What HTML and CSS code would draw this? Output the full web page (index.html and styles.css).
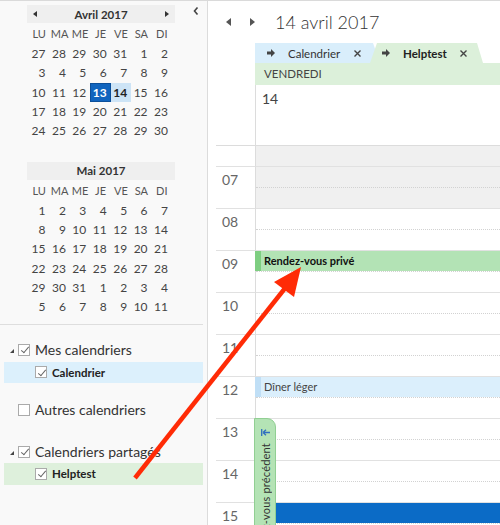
FILE: index.html
```html
<!DOCTYPE html>
<html lang="fr">
<head>
  <meta charset="UTF-8">
  <meta name="viewport" content="width=device-width, initial-scale=1">
  <title>Calendrier - Helptest</title>
  <link rel="stylesheet" href="styles.css">
</head>
<body>

<div class="app">

  <!-- Volet de navigation -->
  <aside class="nav-pane">
    <div class="nav-top">
      <div class="months">

        <!-- Avril -->
        <div class="mini-title">
          <span class="tri tri-left"></span>
          <span>Avril 2017</span>
          <span class="tri tri-right"></span>
        </div>
        <div class="mini-grid">
          <span class="dow">LU</span><span class="dow">MA</span><span class="dow">ME</span><span class="dow">JE</span><span class="dow">VE</span><span class="dow">SA</span><span class="dow">DI</span>
          <span>27</span><span>28</span><span>29</span><span>30</span><span>31</span><span>1</span><span>2</span>
          <span>3</span><span>4</span><span>5</span><span>6</span><span>7</span><span>8</span><span>9</span>
          <span>10</span><span>11</span><span>12</span><span class="sel">13</span><span class="today">14</span><span>15</span><span>16</span>
          <span>17</span><span>18</span><span>19</span><span>20</span><span>21</span><span>22</span><span>23</span>
          <span>24</span><span>25</span><span>26</span><span>27</span><span>28</span><span>29</span><span>30</span>
          <span></span><span></span><span></span><span></span><span></span><span></span><span></span>
        </div>

        <!-- Mai -->
        <div class="mini-title solo">
          <span>Mai 2017</span>
        </div>
        <div class="mini-grid">
          <span class="dow">LU</span><span class="dow">MA</span><span class="dow">ME</span><span class="dow">JE</span><span class="dow">VE</span><span class="dow">SA</span><span class="dow">DI</span>
          <span>1</span><span>2</span><span>3</span><span>4</span><span>5</span><span>6</span><span>7</span>
          <span>8</span><span>9</span><span>10</span><span>11</span><span>12</span><span>13</span><span>14</span>
          <span>15</span><span>16</span><span>17</span><span>18</span><span>19</span><span>20</span><span>21</span>
          <span>22</span><span>23</span><span>24</span><span>25</span><span>26</span><span>27</span><span>28</span>
          <span>29</span><span>30</span><span>31</span><span>1</span><span>2</span><span>3</span><span>4</span>
          <span>5</span><span>6</span><span>7</span><span>8</span><span>9</span><span>10</span><span>11</span>
        </div>
      </div>

      <svg class="collapse" width="6" height="8" viewBox="0 0 6 8">
        <path d="M4.5 0.5 L1.5 4 L4.5 7.5" fill="none" stroke="#444" stroke-width="1.6"/>
      </svg>
    </div>

    <!-- Dossiers -->
    <div class="folders">
      <div class="group">
        <span class="twisty"></span><span class="check on"></span>Mes calendriers
      </div>
      <div class="item item-blue"><span class="check on"></span>Calendrier</div>

      <div class="group solo"><span class="check"></span>Autres calendriers</div>

      <div class="group shared">
        <span class="twisty"></span><span class="check on"></span>Calendriers partagés
      </div>
      <div class="item item-green"><span class="check on"></span>Helptest</div>
    </div>
  </aside>

  <!-- Vue jour -->
  <main class="cal-pane">
    <div class="cal-head">
      <span class="nav-arrow nav-prev"></span>
      <span class="nav-arrow nav-next"></span>
      <h1>14 avril 2017</h1>
    </div>

    <div class="cal-body">
      <div class="gutter">
        <div class="gutter-top"></div>
        <div class="gutter-half"></div>
        <div class="label">07</div>
        <div class="label">08</div>
        <div class="label">09</div>
        <div class="label">10</div>
        <div class="label">11</div>
        <div class="label">12</div>
        <div class="label">13</div>
        <div class="label">14</div>
        <div class="label">15</div>
      </div>

      <div class="day-col">
        <div class="tabs">
          <div class="tab tab-cal">
            <svg class="tab-icon" width="8" height="8" viewBox="0 0 8 8"><path d="M0 2.5H4V0L8 4L4 8V5.5H0Z" fill="#444"/></svg>
            <span class="tab-name">Calendrier</span>
            <svg class="tab-close" width="7" height="7" viewBox="0 0 7 7"><path d="M0.5 0.5L6.5 6.5M6.5 0.5L0.5 6.5" stroke="#444" stroke-width="1.4"/></svg>
          </div>
          <div class="tab tab-help">
            <svg class="tab-icon" width="8" height="8" viewBox="0 0 8 8"><path d="M0 2.5H4V0L8 4L4 8V5.5H0Z" fill="#444"/></svg>
            <span class="tab-name">Helptest</span>
            <svg class="tab-close" width="7" height="7" viewBox="0 0 7 7"><path d="M0.5 0.5L6.5 6.5M6.5 0.5L0.5 6.5" stroke="#444" stroke-width="1.4"/></svg>
          </div>
        </div>
        <div class="day-head">VENDREDI</div>
        <div class="all-day">14</div>

        <div class="slot half off"></div>
        <div class="slot off"></div>
        <div class="slot"></div>
        <div class="slot"><div class="event ev-private">Rendez-vous privé</div></div>
        <div class="slot"></div>
        <div class="slot"></div>
        <div class="slot"><div class="event ev-lunch">Dîner léger</div></div>
        <div class="slot"></div>
        <div class="slot"></div>
        <div class="slot"><div class="event ev-busy"></div></div>

        <!-- onglet rendez-vous précédent -->
        <div class="prev-tab">
          <svg width="9" height="7" viewBox="0 0 9 7"><path d="M0.7 0V7M2 3.5H9M2 3.5L5 0.8M2 3.5L5 6.2" fill="none" stroke="#2f6fc0" stroke-width="1.3"/></svg>
          <span class="prev-text">Rendez-vous précédent</span>
        </div>
      </div>
    </div>
  </main>

  <!-- flèche d'annotation -->
  <svg class="annotation" width="500" height="525" viewBox="0 0 500 525">
    <line x1="135" y1="478" x2="286" y2="287" stroke="#ff2b06" stroke-width="4.5"/>
    <polygon points="301,267 274,282 294,297" fill="#ff2b06"/>
  </svg>
</div>

</body>
</html>
```

FILE: styles.css
```css
* {
  box-sizing: border-box;
}

html, body {
  margin: 0;
  height: 100%;
}

body {
  font-family: "Lato", "Liberation Sans", sans-serif;
  color: #333;
  background: #fff;
  overflow: hidden;
}

.app {
  position: relative;
  display: flex;
  height: 525px;
  border-top: 1px solid #dadada;
}

/* Volet de navigation */
.nav-pane {
  width: 208px;
  flex: none;
  background: #f9f9f9;
  border-right: 1px solid #dcdcdc;
  padding-top: 4px;
}

.nav-top {
  display: flex;
  align-items: flex-start;
}

.months {
  width: 148px;
  margin-left: 27px;
}

.collapse {
  margin: 2px 0 0 18px;
}

.mini-title {
  height: 18px;
  display: flex;
  align-items: center;
  justify-content: space-between;
  padding: 0 6px;
  background: #efefef;
  font-size: 11.5px;
  font-weight: 700;
  color: #333;
}

.mini-title.solo {
  justify-content: center;
  margin-top: 2px;
}

.tri {
  width: 0;
  height: 0;
  border-top: 3.5px solid transparent;
  border-bottom: 3.5px solid transparent;
}

.tri-left {
  border-right: 4px solid #333;
}

.tri-right {
  border-left: 4px solid #333;
}

.mini-grid {
  display: grid;
  grid-template-columns: repeat(7, 1fr);
  grid-template-rows: 21px;
  grid-auto-rows: 19.3px;
  padding: 0 3px 0 2px;
  font-size: 12px;
  color: #444;
}

.mini-grid span {
  text-align: right;
  padding-right: 4px;
  line-height: 19px;
}

.mini-grid .dow {
  text-align: center;
  padding-right: 0;
  line-height: 21px;
  font-size: 11px;
  color: #555;
}

.mini-grid .sel {
  background: #1064be;
  border: 1px solid #0b4f9a;
  line-height: 17px;
  padding-right: 3px;
  color: #fff;
  font-weight: 700;
}

.mini-grid .today {
  background: #cde4f6;
  color: #222;
  font-weight: 700;
}

/* Dossiers */
.folders {
  margin: 7px 4px 0 0;
  border-top: 1px solid #dedede;
  padding: 14px 0 0 4px;
}

.group {
  display: flex;
  align-items: center;
  height: 22px;
  font-size: 14px;
  color: #333;
}

.group.solo {
  margin-top: 16px;
  padding-left: 14px;
}

.group.shared {
  margin-top: 20px;
}

.twisty {
  width: 0;
  height: 0;
  margin: 3px 0 0 6px;
  border-left: 4px solid transparent;
  border-bottom: 4px solid #444;
}

.check {
  position: relative;
  width: 12px;
  height: 12px;
  flex: none;
  margin: 0 5px 0 4px;
  background: #fff;
  border: 1px solid #aaa;
}

.group.solo .check {
  margin-left: 0;
}

.check.on::after {
  content: '';
  position: absolute;
  left: 3.5px;
  top: 0.5px;
  width: 3px;
  height: 7px;
  border-right: 1.4px solid #666;
  border-bottom: 1.4px solid #666;
  transform: rotate(40deg);
}

.item {
  display: flex;
  align-items: center;
  height: 21px;
  margin-top: 1px;
  padding-left: 31px;
  font-size: 11.5px;
  font-weight: 700;
  color: #222;
}

.item .check {
  margin-left: 0;
}

.item-blue {
  background: #dcf0fc;
}

.item-green {
  height: 22px;
  margin-top: 0;
  background: #def0dc;
}

/* Vue jour */
.cal-pane {
  flex: 1;
  min-width: 0;
  display: flex;
  flex-direction: column;
}

.cal-head {
  height: 42px;
  flex: none;
  display: flex;
  align-items: center;
  padding-left: 18px;
}

.nav-arrow {
  width: 0;
  height: 0;
  border-top: 4px solid transparent;
  border-bottom: 4px solid transparent;
}

.nav-prev {
  border-right: 5px solid #555;
}

.nav-next {
  margin-left: 19px;
  border-left: 5px solid #555;
}

.cal-head h1 {
  margin: 0 0 0 20px;
  font-size: 18px;
  font-weight: 300;
  color: #333;
}

.cal-body {
  flex: 1;
  display: flex;
  min-height: 0;
}

.gutter {
  width: 47px;
  flex: none;
}

.gutter-top {
  height: 103px;
  margin-left: 8px;
  border-bottom: 1px solid #dcdcdc;
}

.gutter-half {
  height: 20px;
}

.label {
  height: 42px;
  margin-left: 8px;
  padding: 3px 0 0 6px;
  border-top: 1px solid #e1e1e1;
  font-size: 14px;
  line-height: 20px;
  color: #666;
}

.day-col {
  position: relative;
  flex: 1;
  min-width: 0;
}

.tabs {
  display: flex;
  height: 20px;
}

.tab {
  display: flex;
  align-items: center;
  height: 20px;
  padding-left: 12px;
  font-size: 11.5px;
  color: #333;
}

.tab-name {
  margin: 0 14px 0 13px;
}

.tab-cal {
  width: 125px;
  background: #d9eefb;
  clip-path: polygon(0 0, calc(100% - 7px) 0, 100% 100%, 0 100%);
}

.tab-help {
  width: 113px;
  margin-left: -10px;
  background: #dcf0da;
  font-weight: 700;
  color: #222;
  clip-path: polygon(7px 0, calc(100% - 6px) 0, 100% 100%, 0 100%);
}

.tab-help .tab-name {
  margin-right: 13px;
}

.day-head {
  height: 22px;
  padding-left: 9px;
  background: #dcf0da;
  font-size: 11.5px;
  line-height: 22px;
  color: #444;
}

.all-day {
  height: 61px;
  padding: 5px 0 0 6px;
  border-left: 1px solid #dcdcdc;
  border-bottom: 1px solid #dcdcdc;
  font-size: 14px;
  color: #444;
}

.slot {
  position: relative;
  height: 42px;
  border-left: 1px solid #dcdcdc;
  border-top: 1px solid #e1e1e1;
}

.slot::after {
  content: '';
  position: absolute;
  left: 0;
  right: 0;
  top: 20px;
  border-top: 1px dotted #d2d2d2;
}

.slot.half {
  height: 20px;
  border-top: none;
}

.slot.half::after {
  display: none;
}

.off {
  background: #f0f0f0;
}

.event {
  position: relative;
  z-index: 1;
  height: 20px;
  padding-left: 3px;
  font-size: 11px;
  line-height: 19px;
  white-space: nowrap;
}

.ev-private {
  margin-left: -1px;
  background: #b3e3b5;
  border-left: 6px solid #7ece81;
  font-weight: 700;
  color: #111;
}

.ev-lunch {
  margin-left: -1px;
  background: #dbeffc;
  border-left: 6px solid #c0dff6;
  color: #444;
}

.ev-busy {
  margin-left: 20px;
  background: #0b6bc6;
}

.prev-tab {
  position: absolute;
  left: -1px;
  top: 375px;
  width: 22px;
  height: 160px;
  display: flex;
  flex-direction: column;
  align-items: center;
  padding-top: 10px;
  background: #b4e3b5;
  border: 1px solid #91cf93;
  border-radius: 0 9px 0 0;
  z-index: 2;
}

.prev-text {
  margin-top: 7px;
  writing-mode: vertical-rl;
  transform: rotate(180deg);
  white-space: nowrap;
  font-size: 11px;
  letter-spacing: 0.2px;
  color: #333;
}

/* Flèche d'annotation */
.annotation {
  position: absolute;
  left: 0;
  top: -1px;
  pointer-events: none;
  z-index: 5;
}
```
